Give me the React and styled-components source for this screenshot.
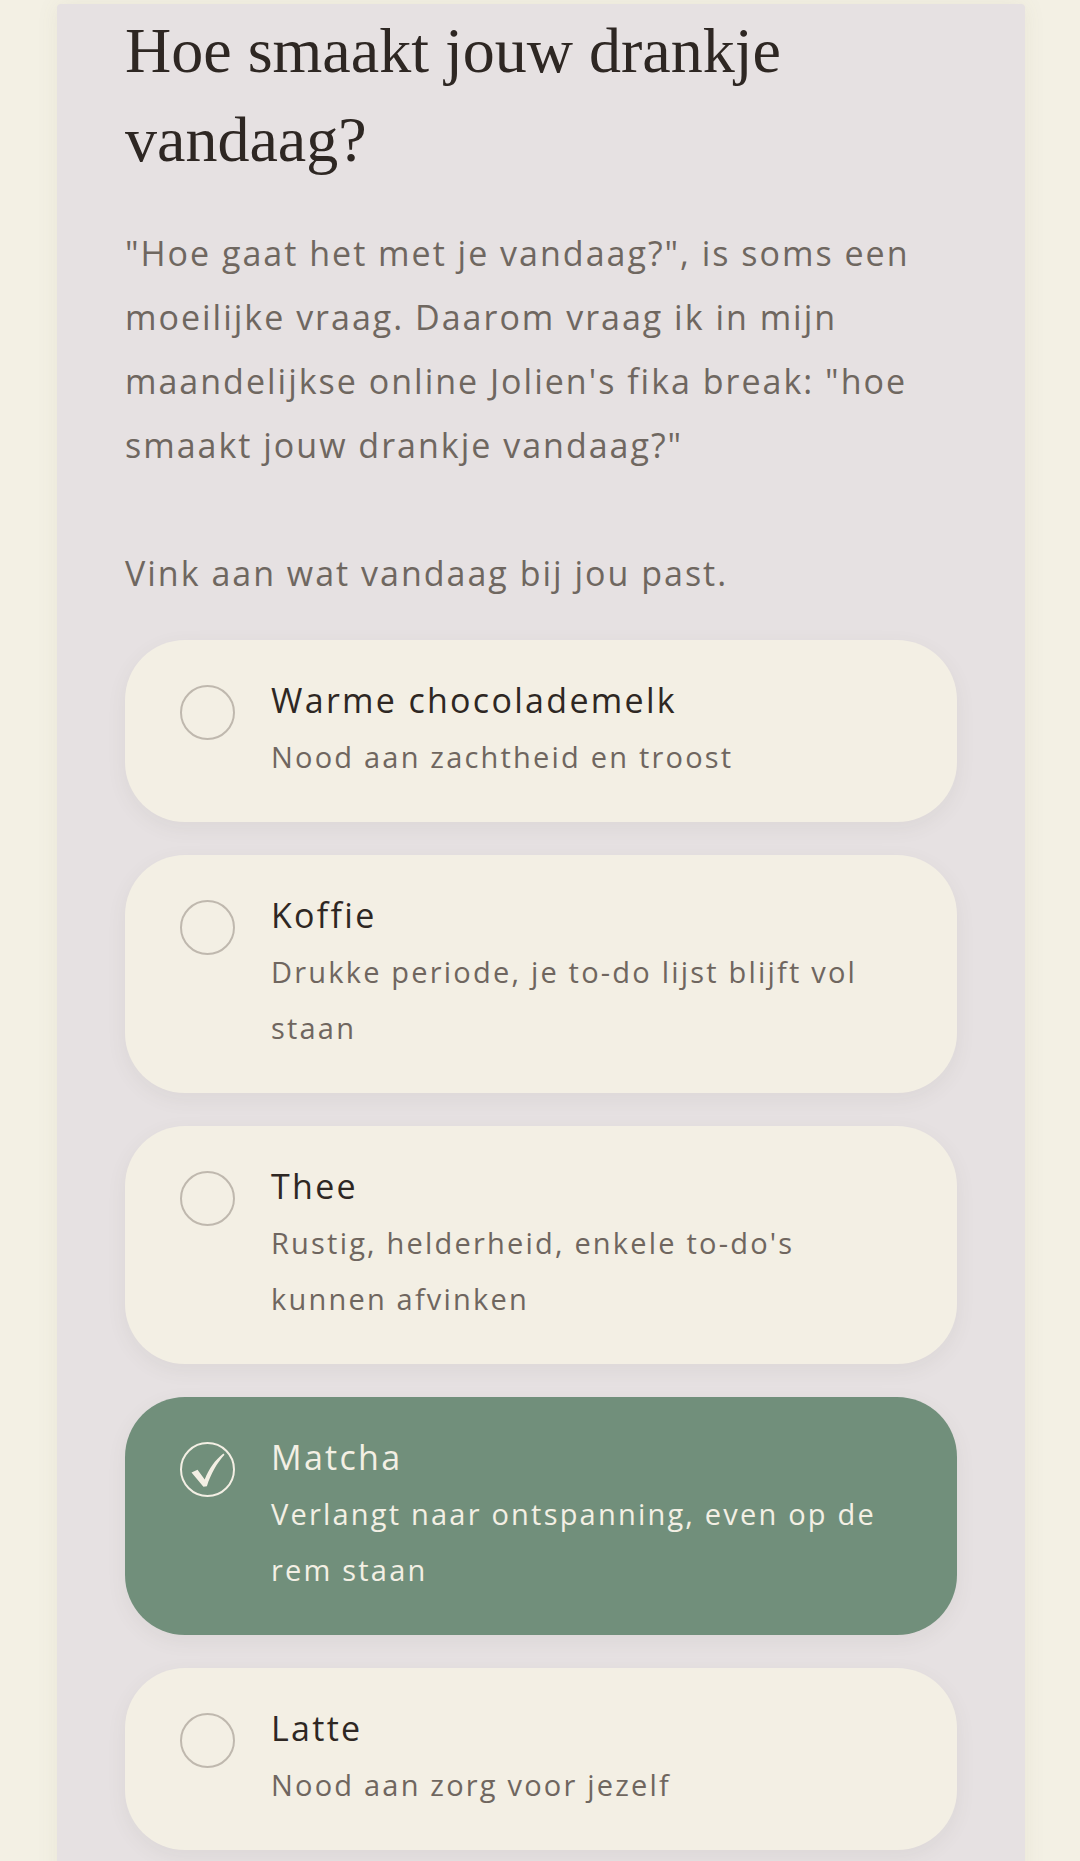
import React, { useState } from "react";
import styled, { createGlobalStyle } from "styled-components";

const GlobalStyle = createGlobalStyle`
  body {
    margin: 0;
    background: #f3f0e4;
  }
`;

const Page = styled.div`
  padding: 4px 55px 0 57px;
  min-height: 1861px;
  box-sizing: border-box;
`;

const Panel = styled.div`
  background: #e6e1e2;
  padding: 2px 68px 40px 68px;
  box-shadow: 0 0 22px rgba(120, 110, 80, 0.08);
  border-radius: 4px 4px 0 0;
`;

const Title = styled.h1`
  margin: 0;
  font-family: "Liberation Serif", "DejaVu Serif", serif;
  font-weight: 400;
  font-size: 64px;
  line-height: 89px;
  color: #2e2723;
`;

const Text = styled.p`
  margin: ${(p) => p.$top || 0}px 0 0 0;
  font-family: "Open Sans", "Liberation Sans", sans-serif;
  font-size: 34px;
  line-height: 64px;
  letter-spacing: 2px;
  color: #6f6760;
`;

const List = styled.div`
  display: flex;
  flex-direction: column;
  gap: 33px;
  margin-top: 35px;
`;

const Card = styled.div`
  display: flex;
  align-items: flex-start;
  gap: 36px;
  padding: 36px 60px 37px 55px;
  border-radius: 60px;
  background: ${(p) => (p.$checked ? "#718f7b" : "#f3efe4")};
  box-shadow: 0 6px 20px rgba(90, 80, 70, 0.07);
  cursor: pointer;
`;

const Circle = styled.div`
  flex: none;
  width: 51px;
  height: 51px;
  margin-top: 9px;
  border-radius: 50%;
  border: 2px solid ${(p) => (p.$checked ? "#f3efe4" : "#bfb8ae")};
  display: flex;
  align-items: center;
  justify-content: center;
`;

const Body = styled.div`
  display: flex;
  flex-direction: column;
  gap: 5px;
`;

const Name = styled.div`
  font-family: "Open Sans", "Liberation Sans", sans-serif;
  font-size: 34px;
  line-height: 48px;
  letter-spacing: 2.3px;
  color: ${(p) => (p.$checked ? "#f3efe4" : "#2e2723")};
`;

const Desc = styled.div`
  font-family: "Open Sans", "Liberation Sans", sans-serif;
  font-size: 29px;
  line-height: 56px;
  letter-spacing: 2.2px;
  color: ${(p) => (p.$checked ? "#f3efe4" : "#6f665f")};
`;

function Check() {
  return (
    <svg width="44" height="44" viewBox="0 0 24 24">
      <path
        d="M3 13.4 L6.3 11.9 L10.2 17.2 C12.6 11.2 16 6.4 20.4 3 L21 3.7 C16.8 8.3 13.6 14 11.4 20.8 L9.5 21.2 Z"
        fill="#f3efe4"
      />
    </svg>
  );
}

const drinks = [
  { name: "Warme chocolademelk", desc: "Nood aan zachtheid en troost" },
  { name: "Koffie", desc: "Drukke periode, je to-do lijst blijft vol staan" },
  { name: "Thee", desc: "Rustig, helderheid, enkele to-do's kunnen afvinken" },
  { name: "Matcha", desc: "Verlangt naar ontspanning, even op de rem staan" },
  { name: "Latte", desc: "Nood aan zorg voor jezelf" },
];

export default function App() {
  const [picked, setPicked] = useState(["Matcha"]);

  function toggle(name) {
    setPicked(picked.includes(name) ? picked.filter((x) => x !== name) : [...picked, name]);
  }

  return (
    <>
      <GlobalStyle />
      <Page>
        <Panel>
          <Title>Hoe smaakt jouw drankje vandaag?</Title>
          <Text $top={37}>
            "Hoe gaat het met je vandaag?", is soms een moeilijke vraag. Daarom vraag ik in mijn
            maandelijkse online Jolien's fika break: "hoe smaakt jouw drankje vandaag?"
          </Text>
          <Text $top={64}>Vink aan wat vandaag bij jou past.</Text>
          <List>
            {drinks.map((d) => {
              const on = picked.includes(d.name);
              return (
                <Card key={d.name} $checked={on} onClick={() => toggle(d.name)}>
                  <Circle $checked={on}>{on && <Check />}</Circle>
                  <Body>
                    <Name $checked={on}>{d.name}</Name>
                    <Desc $checked={on}>{d.desc}</Desc>
                  </Body>
                </Card>
              );
            })}
          </List>
        </Panel>
      </Page>
    </>
  );
}
